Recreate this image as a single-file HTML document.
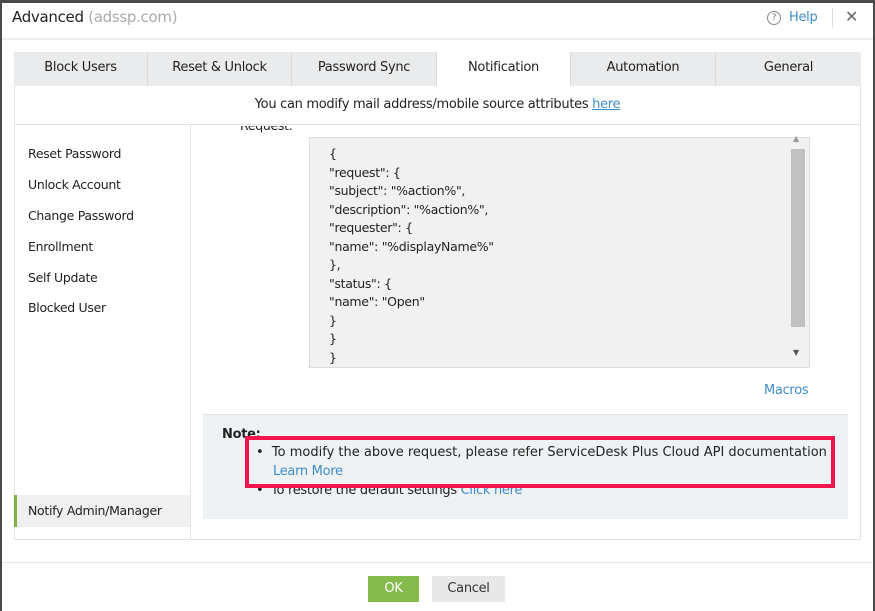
<!DOCTYPE html>
<html><head><meta charset="utf-8"><style>
*{margin:0;padding:0;box-sizing:border-box}
body{width:875px;height:611px;background:#4a4a4a;font-family:"DejaVu Sans","Liberation Sans",sans-serif;font-size:12.5px;color:#222;position:relative;overflow:hidden;letter-spacing:-0.3px}
.a{position:absolute}
#dlg{left:2px;top:3px;width:871px;height:608px;background:#fff}
.tab{position:absolute;top:52px;height:34px;line-height:32px;text-align:center;background:#e9ebec;border-right:1px solid #d8d8d8;font-size:13px}
.nav{position:absolute;left:28px;font-size:12.5px}
a{color:#3f8cc8}
</style></head><body>
<div id="dlg" class="a"></div>
<div class="a" style="left:12px;top:8px;font-size:15px">Advanced <span style="color:#aaa">(adssp.com)</span></div>
<div class="a" style="left:767px;top:11px;width:14px;height:14px;border:1px solid #888;border-radius:50%;font-size:9px;text-align:center;line-height:12px;color:#777">?</div>
<div class="a" style="left:789px;top:10px;font-size:13px;color:#3f8cc8">Help</div>
<div class="a" style="left:832px;top:8px;width:1px;height:20px;background:#ddd"></div>
<div class="a" style="left:845px;top:7px;font-size:16px;color:#666">✕</div>
<div class="a" style="left:2px;top:38px;width:871px;height:2px;background:#eee"></div>
<div class="a" style="left:14px;top:52px;width:847px;height:488px;border:1px solid #e2e2e2"></div>
<div class="tab" style="left:14px;width:134px">Block Users</div>
<div class="tab" style="left:148px;width:144px">Reset &amp; Unlock</div>
<div class="tab" style="left:292px;width:145px">Password Sync</div>
<div class="tab" style="left:437px;width:134px;background:#fff">Notification</div>
<div class="tab" style="left:571px;width:145px">Automation</div>
<div class="tab" style="left:716px;width:145px;border-right:none">General</div>
<div class="a" style="left:14px;top:97px;width:847px;text-align:center;font-size:13px">You can modify mail address/mobile source attributes <a style="text-decoration:underline">here</a></div>
<div class="a" style="left:14px;top:124px;width:847px;height:1px;background:#e2e2e2"></div>
<div class="a" style="left:190px;top:125px;width:1px;height:415px;background:#e2e2e2"></div>
<div class="a" style="left:240px;top:126px;width:60px;height:8px;overflow:hidden"><div style="position:absolute;top:-8px;font-size:12.5px">Request:</div></div>
<div class="nav" style="top:146px">Reset Password</div>
<div class="nav" style="top:177px">Unlock Account</div>
<div class="nav" style="top:208px">Change Password</div>
<div class="nav" style="top:239px">Enrollment</div>
<div class="nav" style="top:270px">Self Update</div>
<div class="nav" style="top:300px">Blocked User</div>
<div class="a" style="left:14px;top:495px;width:176px;height:32px;background:#f0f0f0;border-left:3px solid #7cb342"></div>
<div class="nav" style="top:503px">Notify Admin/Manager</div>
<div class="a" style="left:309px;top:137px;width:501px;height:231px;background:#f1f1f1;border:1px solid #ddd;overflow:hidden">
<div style="position:absolute;left:19px;top:7px;font-size:12.5px;line-height:18.5px">{<br>"request": {<br>"subject": "%action%",<br>"description": "%action%",<br>"requester": {<br>"name": "%displayName%"<br>},<br>"status": {<br>"name": "Open"<br>}<br>}<br>}</div>
</div>
<div class="a" style="left:790px;top:138px;width:18px;height:228px;background:#f1f1f1"></div>
<div class="a" style="left:791px;top:149px;width:14px;height:178px;background:#c1c1c1"></div>
<div class="a" style="left:793px;top:134px;font-size:8px;color:#999">▲</div>
<div class="a" style="left:793px;top:348px;font-size:8px;color:#555">▼</div>
<div class="a" style="left:764px;top:383px;font-size:13px;color:#3f8cc8">Macros</div>
<div class="a" style="left:203px;top:414px;width:645px;height:105px;background:#eff2f4;border-top:1px solid #e0e4e6"></div>
<div class="a" style="left:222px;top:427px;font-weight:bold;font-size:13px">Note:</div>
<div class="a" style="left:256px;top:445px;font-size:13px;letter-spacing:0">•&nbsp; To modify the above request, please refer ServiceDesk Plus Cloud API documentation</div>
<div class="a" style="left:273px;top:464px;font-size:13px;color:#3f8cc8">Learn More</div>
<div class="a" style="left:256px;top:483px;font-size:13px">•&nbsp; To restore the default settings <span style="color:#3f8cc8">Click here</span></div>
<div class="a" style="left:245px;top:436px;width:590px;height:52px;border:4px solid #f0144f;background:transparent"></div>
<div class="a" style="left:2px;top:562px;width:871px;height:1px;background:#e6e6e6"></div>
<div class="a" style="left:368px;top:576px;width:51px;height:26px;background:#84bb4c;color:#fff;text-align:center;line-height:26px;font-size:13px">OK</div>
<div class="a" style="left:432px;top:576px;width:73px;height:26px;background:#e8e8e8;text-align:center;line-height:26px;font-size:13px;color:#333">Cancel</div>
</body></html>
